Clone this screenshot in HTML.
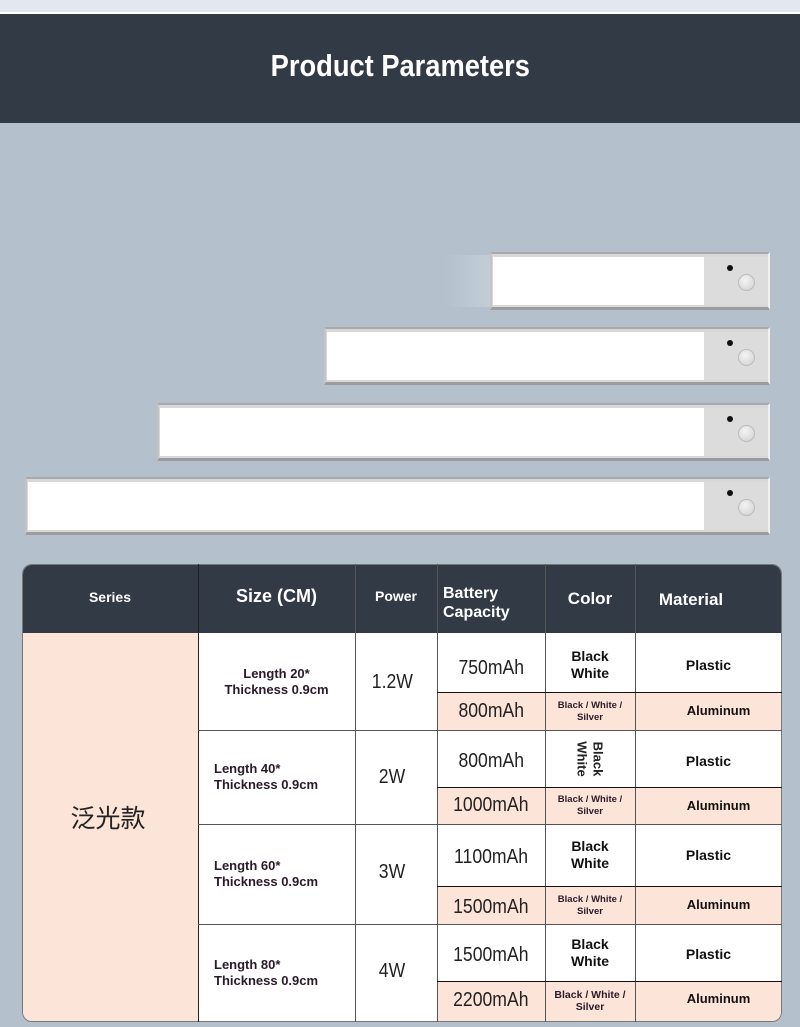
<!DOCTYPE html>
<html><head><meta charset="utf-8"><style>
*{margin:0;padding:0;box-sizing:border-box}
body{width:800px;height:1027px;background:#b4c1cd;position:relative;overflow:hidden;font-family:"Liberation Sans","Noto Sans CJK SC",sans-serif}
.a{position:absolute}
.bar{position:absolute;background:#d8d8d8;border-top:2px solid #a9a9a9;border-bottom:3px solid #9c9c9c;border-left:2px solid #c4c4c4;border-right:2px solid #f0f0f0}
.bar .w{position:absolute;left:1px;top:3px;bottom:2px;background:#fff}
.bar .g{position:absolute;right:0;top:3px;bottom:2px;width:64px;background:#dcdcdc}
.bar .d{position:absolute;width:6px;height:6px;border-radius:50%;background:#111;left:23px;top:8px}
.bar .c{position:absolute;width:17px;height:17px;border-radius:50%;background:radial-gradient(circle at 40% 35%,#f4f4f4,#cfcfcf);border:1px solid #bbb;left:34px;top:17px}
.cell{position:absolute;display:flex;align-items:center;justify-content:center;text-align:center;color:#2a1a2a}
.hd{color:#fff;font-weight:bold}
.vl{position:absolute;width:1px;background:#555}
.hl{position:absolute;height:1px;background:#555}
.pk{position:absolute;background:#fde4d8}
.b{font-weight:bold;font-size:13px;line-height:16px}
.m{font-size:20px;color:#222}
.m span{display:inline-block;transform:scaleX(0.88)}
.s{font-weight:bold;font-size:9.5px;line-height:12px}
</style></head><body>
<div class="a" style="left:0;top:0;width:800px;height:12px;background:#e3e7f0"></div>
<div class="a" style="left:0;top:12px;width:800px;height:2px;background:#fff"></div>
<div class="a" style="left:0;top:14px;width:800px;height:109px;background:#323a45"></div>
<div class="a" style="left:0;top:48px;width:800px;text-align:center;color:#fff;font-weight:bold;font-size:31px"><span style="display:inline-block;transform:scaleX(0.88)">Product Parameters</span></div>

<div class="a" style="left:445px;top:255px;width:50px;height:52px;background:linear-gradient(90deg,rgba(200,210,220,0),#c3ced8)"></div>
<div class="bar" style="left:490px;top:252px;width:280px;height:58px"><div class="w" style="right:64px"></div><div class="g"><div class="d"></div><div class="c"></div></div></div>
<div class="bar" style="left:324px;top:327px;width:446px;height:58px"><div class="w" style="right:64px"></div><div class="g"><div class="d"></div><div class="c"></div></div></div>
<div class="bar" style="left:157px;top:403px;width:613px;height:58px"><div class="w" style="right:64px"></div><div class="g"><div class="d"></div><div class="c"></div></div></div>
<div class="bar" style="left:25px;top:477px;width:745px;height:58px"><div class="w" style="right:64px"></div><div class="g"><div class="d"></div><div class="c"></div></div></div>

<div class="a" style="left:22px;top:564px;width:760px;height:458px;background:#fff;border-radius:10px;overflow:hidden;border:1px solid #777">
<div class="a" style="left:0;top:0;width:760px;height:68px;background:#323a45"></div>
<div class="pk" style="left:0;top:68px;width:176px;height:390px"></div>
<div class="pk" style="left:415px;top:128px;width:345px;height:38px"></div>
<div class="pk" style="left:415px;top:223px;width:345px;height:37px"></div>
<div class="pk" style="left:415px;top:322px;width:345px;height:38px"></div>
<div class="pk" style="left:415px;top:417px;width:345px;height:41px"></div>
</div>
<div class="vl" style="left:198px;top:564px;height:458px;background:#222"></div>
<div class="vl" style="left:355px;top:564px;height:458px"></div>
<div class="vl" style="left:437px;top:564px;height:458px"></div>
<div class="vl" style="left:545px;top:564px;height:458px"></div>
<div class="vl" style="left:635px;top:564px;height:458px"></div>
<div class="hl" style="left:198px;top:730px;width:584px"></div>
<div class="hl" style="left:198px;top:824px;width:584px"></div>
<div class="hl" style="left:198px;top:924px;width:584px"></div>
<div class="hl" style="left:437px;top:692px;width:345px;background:#111"></div>
<div class="hl" style="left:437px;top:787px;width:345px;background:#111"></div>
<div class="hl" style="left:437px;top:886px;width:345px;background:#111"></div>
<div class="hl" style="left:437px;top:981px;width:345px;background:#111"></div>

<div class="cell hd" style="left:22px;top:564px;width:176px;height:66px;font-size:14px">Series</div>
<div class="cell hd" style="left:198px;top:564px;width:157px;height:64px;font-size:18px">Size (CM)</div>
<div class="cell hd" style="left:355px;top:564px;width:82px;height:64px;font-size:14px">Power</div>
<div class="cell hd" style="left:443px;top:564px;width:102px;height:78px;font-size:16px;justify-content:flex-start;text-align:left;line-height:19px">Battery<br>Capacity</div>
<div class="cell hd" style="left:545px;top:564px;width:90px;height:70px;font-size:17px">Color</div>
<div class="cell hd" style="left:635px;top:564px;width:112px;height:72px;font-size:17px">Material</div>

<div class="cell" style="left:22px;top:632px;width:172px;height:370px;font-size:25px;color:#222">泛光款</div>

<div class="cell b" style="left:198px;top:632px;width:157px;height:100px">Length 20*<br>Thickness 0.9cm</div>
<div class="cell b" style="left:214px;top:730px;width:141px;height:94px;justify-content:flex-start;text-align:left">Length 40*<br>Thickness 0.9cm</div>
<div class="cell b" style="left:214px;top:824px;width:141px;height:100px;justify-content:flex-start;text-align:left">Length 60*<br>Thickness 0.9cm</div>
<div class="cell b" style="left:214px;top:924px;width:141px;height:97px;justify-content:flex-start;text-align:left">Length 80*<br>Thickness 0.9cm</div>

<div class="cell m" style="left:355px;top:632px;width:74px;height:100px"><span>1.2W</span></div>
<div class="cell m" style="left:355px;top:730px;width:74px;height:94px"><span>2W</span></div>
<div class="cell m" style="left:355px;top:824px;width:74px;height:96px"><span>3W</span></div>
<div class="cell m" style="left:355px;top:924px;width:74px;height:94px"><span>4W</span></div>

<div class="cell m" style="left:437px;top:632px;width:108px;height:72px"><span>750mAh</span></div>
<div class="cell m" style="left:437px;top:692px;width:108px;height:38px"><span>800mAh</span></div>
<div class="cell m" style="left:437px;top:730px;width:108px;height:63px"><span>800mAh</span></div>
<div class="cell m" style="left:437px;top:787px;width:108px;height:37px"><span>1000mAh</span></div>
<div class="cell m" style="left:437px;top:824px;width:108px;height:66px"><span>1100mAh</span></div>
<div class="cell m" style="left:437px;top:886px;width:108px;height:42px"><span>1500mAh</span></div>
<div class="cell m" style="left:437px;top:924px;width:108px;height:63px"><span>1500mAh</span></div>
<div class="cell m" style="left:437px;top:981px;width:108px;height:38px"><span>2200mAh</span></div>

<div class="cell b" style="left:545px;top:640px;width:90px;height:50px;font-size:14px;line-height:17px;color:#111">Black<br>White</div>
<div class="cell s" style="left:545px;top:692px;width:90px;height:40px">Black / White /<br>Silver</div>
<div class="cell b" style="left:545px;top:730px;width:90px;height:57px;font-size:13px;line-height:16px;color:#222"><div style="transform:rotate(90deg)">Black<br>White</div></div>
<div class="cell s" style="left:545px;top:787px;width:90px;height:38px">Black / White /<br>Silver</div>
<div class="cell b" style="left:545px;top:830px;width:90px;height:50px;font-size:14px;line-height:17px;color:#111">Black<br>White</div>
<div class="cell s" style="left:545px;top:886px;width:90px;height:40px">Black / White /<br>Silver</div>
<div class="cell b" style="left:545px;top:928px;width:90px;height:50px;font-size:14px;line-height:17px;color:#111">Black<br>White</div>
<div class="cell s" style="left:545px;top:981px;width:90px;height:40px;font-size:10.5px">Black / White /<br>Silver</div>

<div class="cell b" style="left:635px;top:632px;width:147px;height:66px;font-size:14px;color:#111">Plastic</div>
<div class="cell b" style="left:655px;top:692px;width:127px;height:38px;font-size:13px;color:#111">Aluminum</div>
<div class="cell b" style="left:635px;top:730px;width:147px;height:62px;font-size:14px;color:#111">Plastic</div>
<div class="cell b" style="left:655px;top:787px;width:127px;height:37px;font-size:13px;color:#111">Aluminum</div>
<div class="cell b" style="left:635px;top:824px;width:147px;height:62px;font-size:14px;color:#111">Plastic</div>
<div class="cell b" style="left:655px;top:886px;width:127px;height:38px;font-size:13px;color:#111">Aluminum</div>
<div class="cell b" style="left:635px;top:924px;width:147px;height:60px;font-size:14px;color:#111">Plastic</div>
<div class="cell b" style="left:655px;top:981px;width:127px;height:36px;font-size:13px;color:#111">Aluminum</div>
</body></html>
